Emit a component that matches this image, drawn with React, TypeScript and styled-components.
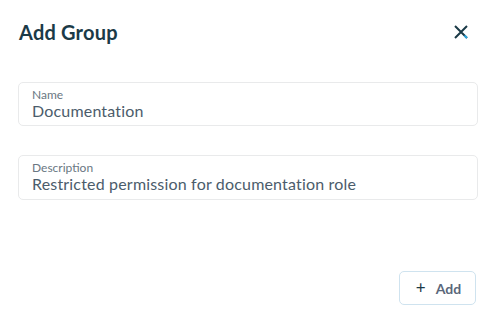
import styled, { createGlobalStyle } from "styled-components";

const GlobalStyle = createGlobalStyle`
  body {
    margin: 0;
    background: #ffffff;
    font-family: Lato, "Open Sans", sans-serif;
  }
`;

const Dialog = styled.div`
  width: 497px;
  height: 329px;
  box-sizing: border-box;
  padding: 16px 19px 0 18px;
  display: flex;
  flex-direction: column;
  background: #ffffff;
`;

const Header = styled.div`
  display: flex;
  justify-content: space-between;
  align-items: center;
  height: 32px;
`;

const Title = styled.h2`
  margin: 0 0 0 1px;
  font-size: 20px;
  font-weight: 700;
  color: #1b3a47;
  letter-spacing: 0.2px;
`;

const CloseButton = styled.button`
  border: none;
  background: none;
  padding: 0;
  margin-right: 10px;
  width: 14px;
  height: 14px;
  display: flex;
  cursor: pointer;
`;

const Form = styled.div`
  display: flex;
  flex-direction: column;
  gap: 29px;
  margin-top: 34px;
`;

const Field = styled.label`
  display: flex;
  flex-direction: column;
  border: 1px solid #e9eaeb;
  border-radius: 5px;
  padding: 5px 13px 7px;
  height: ${(p: { $h: number }) => p.$h}px;
  box-sizing: border-box;
`;

const FieldLabel = styled.span`
  font-size: 12px;
  line-height: 14px;
  color: #6a7782;
`;

const FieldValue = styled.span`
  font-size: 16px;
  line-height: 18px;
  letter-spacing: 0.18px;
  color: #4b5c6b;
`;

const Footer = styled.div`
  display: flex;
  justify-content: flex-end;
  margin-top: 71px;
  padding-right: 2px;
`;

const AddButton = styled.button`
  width: 77px;
  height: 34px;
  border: 1px solid #cfe3ef;
  border-radius: 5px;
  background: #ffffff;
  display: flex;
  align-items: center;
  justify-content: center;
  gap: 10px;
  padding: 0 0 0 2px;
  font-family: Lato, sans-serif;
  font-size: 14px;
  font-weight: 700;
  color: #5a677b;
  cursor: pointer;
`;

const Plus = styled.span`
  font-size: 17px;
  font-weight: 400;
  color: #1b3a47;
  line-height: 1;
  margin-top: -2px;
`;

export default function App() {
  return (
    <>
      <GlobalStyle />
      <Dialog>
        <Header>
          <Title>Add Group</Title>
          <CloseButton aria-label="Close">
            <svg width="14" height="14" viewBox="0 0 14 14">
              <path d="M1 1L13 13M13 1L1 13" stroke="#1b3a47" strokeWidth="2" />
              <path d="M10.5 10.5L13 13" stroke="#2aa8e0" strokeWidth="2" />
            </svg>
          </CloseButton>
        </Header>
        <Form>
          <Field $h={44}>
            <FieldLabel>Name</FieldLabel>
            <FieldValue>Documentation</FieldValue>
          </Field>
          <Field $h={45}>
            <FieldLabel>Description</FieldLabel>
            <FieldValue>Restricted permission for documentation role</FieldValue>
          </Field>
        </Form>
        <Footer>
          <AddButton>
            <Plus>+</Plus>
            Add
          </AddButton>
        </Footer>
      </Dialog>
    </>
  );
}
